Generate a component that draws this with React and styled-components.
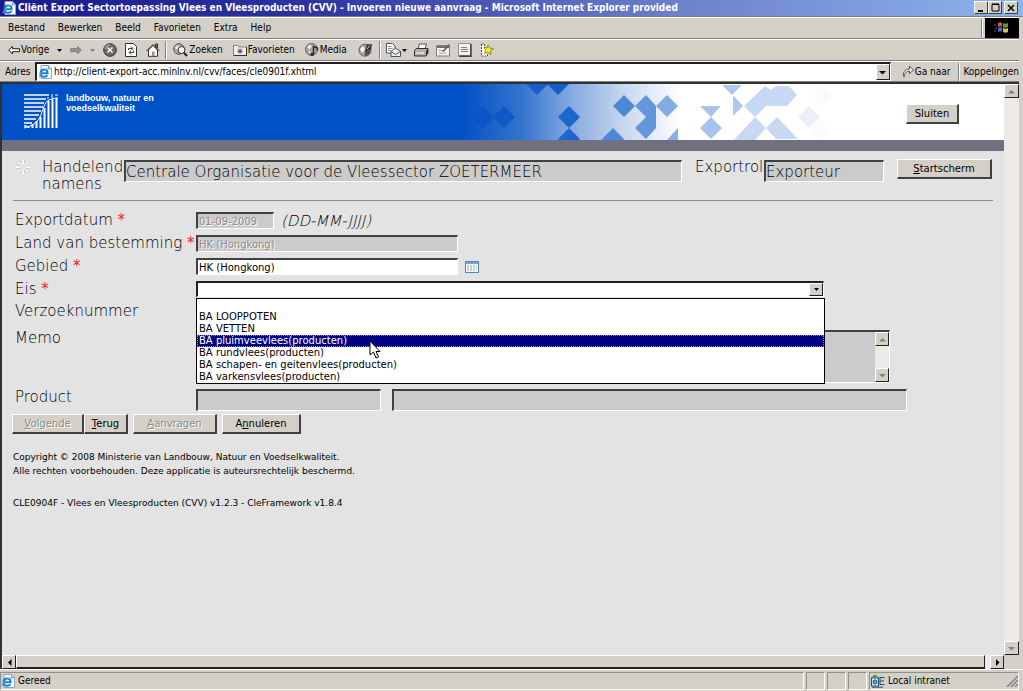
import React from 'react'
import styled, { createGlobalStyle } from 'styled-components'

const GlobalStyle = createGlobalStyle`
  * {
    box-sizing: border-box;
  }
  body {
    margin: 0;
    font-family: 'DejaVu Sans Condensed', 'DejaVu Sans', sans-serif;
    font-size: 10px;
    color: #000000;
  }
  button,
  input,
  select,
  textarea {
    margin: 0;
    border-radius: 0;
    font: inherit;
  }
  svg {
    display: block;
    flex: none;
  }
`

const Window = styled.div`
  display: flex;
  flex-direction: column;
  min-height: 100vh;
  background: #d4d0c8;
`
const TitleBar = styled.header`
  display: flex;
  align-items: center;
  gap: 2px;
  height: 17px;
  padding: 0 5px 1px 2px;
  border-bottom: 1px solid #808080;
  background: linear-gradient(90deg, #1a1a8c 0%, #2c34a0 30%, #6c80cc 66%, #8cb4ec 100%);
`
const Title = styled.h1`
  flex: 1;
  min-width: 0;
  margin: 0;
  overflow: hidden;
  font-size: 10px;
  font-weight: 700;
  line-height: 14px;
  white-space: nowrap;
  color: #ffffff;
`
const WindowButton = styled.button`
  display: flex;
  align-items: center;
  justify-content: center;
  width: 14px;
  height: 13px;
  padding: 0;
  margin-left: ${({ $gap }) => $gap || 0}px;
  border: 1px solid;
  border-color: #ffffff #404040 #404040 #ffffff;
  background: #d4d0c8;
`
const WindowButtons = styled.div`
  display: flex;
`
const Bar = styled.div`
  display: flex;
  align-items: center;
  height: ${({ $height }) => $height || 22}px;
  margin-right: 4px;
  padding-left: ${({ $indent }) => $indent || 0}px;
  border-top: 1px solid #ffffff;
  border-bottom: 1px solid #808080;
  line-height: 14px;
`
const Menu = styled.nav`
  display: flex;
  flex: 1;
  gap: 13px;
`
const MenuLink = styled.a`
  color: #000000;
  text-decoration: none;
`
const Throbber = styled.div`
  display: flex;
  align-items: center;
  justify-content: center;
  width: 34px;
  height: 20px;
  margin-left: 2px;
  background: #000000;
`
const ToolButton = styled.button`
  display: flex;
  align-items: center;
  gap: 1px;
  height: 18px;
  padding: 0;
  margin-left: ${({ $gap }) => $gap || 0}px;
  border: 0;
  background: none;
  line-height: 14px;
  white-space: nowrap;
`
const Divider = styled.span`
  width: 2px;
  height: 18px;
  margin-left: ${({ $gap }) => $gap || 0}px;
  border-left: 1px solid #808080;
  border-right: 1px solid #ffffff;
`
const AddressLabel = styled.label`
  width: 30px;
`
const AddressField = styled.div`
  display: flex;
  flex: 1;
  align-items: center;
  height: 19px;
  padding-left: 1px;
  border: 1px solid;
  border-width: 2px 1px 1px 2px;
  border-color: #202020 #ffffff #ffffff #202020;
  background: #ffffff;
`
const AddressInput = styled.input`
  flex: 1;
  min-width: 0;
  height: 14px;
  padding: 0 2px;
  border: 0;
  outline: 0;
`
const ArrowButton = styled.button`
  display: flex;
  flex: none;
  align-items: center;
  justify-content: center;
  width: ${({ $width }) => $width || 14}px;
  height: ${({ $height }) => $height || 14}px;
  padding: 0;
  border: 1px solid;
  border-color: #ffffff #202020 #202020 #ffffff;
  background: #d4d0c8;
`
const View = styled.main`
  display: grid;
  flex: 1;
  grid-template-columns: minmax(0, 1fr) 15px;
  grid-template-rows: 1fr 14px;
  margin-right: 4px;
  border-top: 2px solid #303030;
  border-left: 2px solid #303030;
`
const Page = styled.div`
  background: #e3e3e3;
  font-family: 'DejaVu Sans', sans-serif;
`
const VerticalTrack = styled.div`
  display: flex;
  flex-direction: column;
  justify-content: space-between;
  background: #eceae6;
`
const HorizontalTrack = styled.div`
  display: flex;
  background: #eceae6;
`
const Thumb = styled.div`
  flex: 1;
  margin-right: 5px;
  border: 1px solid;
  border-width: 1px 1px 2px 1px;
  border-color: #ffffff #202020 #202020 #ffffff;
  background: #d4d0c8;
`
const Banner = styled.div`
  display: flex;
  position: relative;
  align-items: flex-start;
  justify-content: space-between;
  height: 56px;
  padding: 0 45px 0 22px;
  background: linear-gradient(90deg, #0050c6 458px, #3474cc 520px, #86aae0 570px, #c6d6ef 620px, #ffffff 680px);
`
const Pattern = styled.svg`
  position: absolute;
  top: 0;
  left: 458px;
`
const Brand = styled.div`
  display: flex;
  gap: 8px;
  padding-top: 9px;
`
const BrandName = styled.p`
  margin: 0;
  font-family: 'Liberation Sans', sans-serif;
  font-size: 9px;
  font-weight: 700;
  line-height: 10px;
  color: #ffffff;
`
const Rule = styled.div`
  height: 11px;
  background: #707080;
`
const Button = styled.button`
  flex: none;
  width: ${({ $width }) => $width}px;
  height: 20px;
  margin-top: ${({ $top }) => $top || 0}px;
  margin-left: ${({ $gap }) => $gap || 0}px;
  padding: 0;
  border: 1px solid;
  border-width: 1px 2px 2px 1px;
  border-color: #ffffff #404040 #404040 #ffffff;
  background: #d4d0c8;
  line-height: 14px;
  color: #000000;
  &:disabled {
    color: #8c8a84;
    text-shadow: 1px 1px 0 #ffffff;
  }
`
const ActingBar = styled.div`
  display: flex;
  align-items: flex-start;
  height: 50px;
  margin: 0 11px;
  padding: 8px 1px 0 2px;
  border-bottom: 1px solid #8c8c8c;
`
const Text = styled.label`
  font-family: 'DejaVu Sans Light', 'DejaVu Sans', sans-serif;
  font-size: 15px;
  font-weight: 200;
  line-height: 17px;
`
const ActingLabel = styled(Text)`
  flex: none;
  width: ${({ $width }) => $width}px;
  margin-left: ${({ $gap }) => $gap}px;
`
const Field = styled.input`
  width: ${({ $width }) => ($width ? `${$width}px` : 'auto')};
  flex: ${({ $width }) => ($width ? 'none' : 1)};
  min-width: 0;
  height: ${({ $tall }) => ($tall ? 22 : 17)}px;
  margin-left: ${({ $gap }) => $gap || 0}px;
  padding: 0 1px;
  border: 1px solid;
  border-width: 2px 1px 1px 2px;
  border-color: #404040 #ffffff #ffffff #404040;
  outline: 0;
  background: ${({ disabled, readOnly }) => (disabled || readOnly ? '#cbcbcb' : '#ffffff')};
  color: #000000;
  &:disabled {
    color: #8c8c8c;
    text-shadow: 1px 1px 0 #ffffff;
  }
`
const LargeField = styled(Field)`
  margin-top: 1px;
  padding: 0;
  font-family: 'DejaVu Sans Light', 'DejaVu Sans', sans-serif;
  font-size: 15px;
  font-weight: 200;
`
const Form = styled.form`
  padding: 8px 97px 0 13px;
`
const Row = styled.div`
  display: flex;
  align-items: ${({ $top }) => ($top ? 'flex-start' : 'center')};
  height: ${({ $height }) => $height || 23}px;
  margin-top: ${({ $gap }) => $gap || 0}px;
`
const RowLabel = styled(Text)`
  flex: none;
  width: 181px;
  white-space: nowrap;
`
const Star = styled.span`
  font-family: 'DejaVu Sans', sans-serif;
  font-weight: 400;
  color: #f82020;
`
const Hint = styled.em`
  margin-left: 7px;
  font-family: 'DejaVu Sans Light', 'DejaVu Sans', sans-serif;
  font-size: 15px;
  font-weight: 200;
`
const IconButton = styled.button`
  display: flex;
  margin-left: 7px;
  padding: 0;
  border: 0;
  background: none;
`
const Combo = styled.div`
  display: flex;
  position: relative;
  width: 628px;
  height: 16px;
  border: 1px solid;
  border-width: 2px 1px 1px 2px;
  border-color: #202020 #ffffff #ffffff #202020;
  background: #ffffff;
`
const ComboSelect = styled.select`
  flex: 1;
  min-width: 0;
  height: 13px;
  padding: 0;
  border: 0;
  outline: 0;
  appearance: none;
  background: #ffffff;
`
const Options = styled.ul`
  position: absolute;
  z-index: 1;
  top: 15px;
  left: -2px;
  width: 629px;
  margin: 0;
  padding: 0;
  border: 1px solid #000000;
  background: #ffffff;
  list-style: none;
`
const Option = styled.li`
  height: 12px;
  padding-left: 2px;
  line-height: 12px;
  background: ${({ $active }) => ($active ? '#000080' : '#ffffff')};
  color: ${({ $active }) => ($active ? '#ffffff' : '#000000')};
  outline: ${({ $active }) => ($active ? '1px dotted #8c8cc8' : 'none')};
  outline-offset: -1px;
`
const Cursor = styled.svg`
  position: absolute;
  z-index: 2;
  top: 57px;
  left: 171px;
`
const Memo = styled.div`
  display: flex;
  width: 694px;
  height: 53px;
  border: 1px solid;
  border-width: 2px 1px 1px 2px;
  border-color: #404040 #ffffff #ffffff #404040;
`
const MemoInput = styled.textarea`
  flex: 1;
  padding: 0;
  border: 0;
  outline: 0;
  resize: none;
  background: #cbcbcb;
`
const Actions = styled.div`
  display: flex;
  margin: 3px 0 0 -3px;
`
const Footer = styled.footer`
  padding: 16px 11px 0;
  font-size: 9px;
  line-height: 14px;
  p {
    margin: 0 0 18px;
  }
`
const StatusBar = styled.footer`
  display: flex;
  gap: 2px;
  height: 22px;
  padding: 2px 4px 1px 0;
  border-top: 1px solid #ffffff;
`
const StatusCell = styled.div`
  display: flex;
  align-items: center;
  justify-content: space-between;
  width: ${({ $width }) => ($width ? `${$width}px` : 'auto')};
  flex: ${({ $width }) => ($width ? 'none' : 1)};
  border: 1px solid;
  border-color: #909090 #ffffff #ffffff #909090;
`
const StatusText = styled.span`
  display: flex;
  align-items: center;
  gap: 3px;
  line-height: 14px;
`

const ExplorerIcon = () => (
  <svg width="14" height="14" viewBox="0 0 14 14">
    <path d="M3 0.5h7.5l3 3v10H3z" fill="#fff" stroke="#8aa4c4" />
    <path d="M10.5 0.5v3h3" fill="#c8d8e8" stroke="#8aa4c4" />
    <path
      d="M2.6 8.2H9.6C9.6 5.6 8.2 4.6 6.2 4.6S2.6 6 2.6 8.2 4 11.8 6.2 11.8c1.6 0 2.6-.6 3.2-1.6"
      fill="none"
      stroke="#1c7cd0"
      strokeWidth="2"
    />
    <path d="M1 12.5C1.5 8.5 6 3.5 12 3.8" fill="none" stroke="#5ab0ea" />
  </svg>
)
const Arrow = ({ dir = 'down', color = '#000000' }) => {
  const points = {
    down: '0,2 7,2 3.5,5.5',
    up: '0,5.5 7,5.5 3.5,2',
    left: '5.5,0 5.5,7 2,3.5',
    right: '2,0 2,7 5.5,3.5',
  }
  return (
    <svg width="7" height="7" viewBox="0 0 7 7">
      <polygon points={points[dir]} fill={color} />
    </svg>
  )
}
const SmallArrow = ({ color = '#000000' }) => (
  <svg width="5" height="3" viewBox="0 0 5 3">
    <polygon points="0,0 5,0 2.5,3" fill={color} />
  </svg>
)
const BackIcon = () => (
  <svg width="12" height="10" viewBox="0 0 12 10">
    <path d="M.7 5L4.5 1.5v2.2h7v3h-7v2.2z" fill="#f4f4f4" stroke="#202020" />
  </svg>
)
const ForwardIcon = () => (
  <svg width="12" height="10" viewBox="0 0 12 10">
    <path d="M11.3 5L7.5 1.5v2.2h-7v3h7v2.2z" fill="#909090" stroke="#808080" />
  </svg>
)
const StopIcon = () => (
  <svg width="14" height="14" viewBox="0 0 14 14">
    <circle cx="7" cy="7" r="6.3" fill="#6c6c6c" stroke="#303030" />
    <path d="M2 6a5 5 0 015-4" fill="none" stroke="#c8c8c8" />
    <path d="M4.5 4.5l5 5M9.5 4.5l-5 5" stroke="#fff" strokeWidth="1.5" />
  </svg>
)
const RefreshIcon = () => (
  <svg width="12" height="14" viewBox="0 0 12 14">
    <path d="M.5.5h8l3 3v10H.5z" fill="#fff" stroke="#303030" />
    <path d="M3.5 7V5.500h4M6 3.500l2 2-2 2M8.500 7.500v2h-4M6 7.800L4 9.500l2 2" fill="none" stroke="#404040" />
  </svg>
)
const HomeIcon = () => (
  <svg width="14" height="14" viewBox="0 0 14 14">
    <path d="M9.5 1h2v4h-2z" fill="#808080" stroke="#303030" />
    <path d="M2.5 7v6.300h9V7L7 2.500z" fill="#fff" stroke="#303030" />
    <path d="M.5 8L7 1.500 13.500 8" fill="none" stroke="#303030" />
    <path d="M6 8.500h2.500V13H6z" fill="#909090" />
  </svg>
)
const SearchIcon = () => (
  <svg width="15" height="14" viewBox="0 0 15 14">
    <circle cx="6" cy="6" r="5.3" fill="#a8a8a8" stroke="#505050" />
    <path d="M1.5 4.500l3-2.500 2 2-2 3zM2 9l2-1" fill="#e4e4e4" />
    <circle cx="8.5" cy="7" r="3.5" fill="#f4f4f4" stroke="#303030" />
    <path d="M11 9.800l3 3.200" stroke="#202020" strokeWidth="2" />
  </svg>
)
const FavoritesIcon = () => (
  <svg width="14" height="14" viewBox="0 0 14 14">
    <path d="M.5 2.500h4l1.500 1.500h7.500v8.500H.5z" fill="#f0f0f0" stroke="#808080" />
    <path d="M13.500 4v8.500H1" fill="none" stroke="#303030" />
    <path d="M7 5.500v5.500M4.300 8.200h5.400M5 6.200l4 4M9 6.200l-4 4" stroke="#505050" />
  </svg>
)
const MediaIcon = () => (
  <svg width="14" height="14" viewBox="0 0 14 14">
    <circle cx="6.500" cy="6.500" r="6" fill="#a4a4a4" stroke="#606060" />
    <path d="M2 4l3-2.500 2 2L4 6.500zM3 9l2-1.500 1 3z" fill="#e8e8e8" />
    <path d="M8.500 11V3.500l4 1.500v2.500" fill="none" stroke="#303030" strokeWidth="1.5" />
    <circle cx="7.200" cy="11.200" r="1.800" fill="#303030" />
  </svg>
)
const HistoryIcon = () => (
  <svg width="15" height="14" viewBox="0 0 15 14">
    <circle cx="7" cy="7.200" r="6" fill="#a0a0a0" stroke="#606060" />
    <path d="M7 7.200L12.600 8A5.500 5.500 0 017 13z" fill="#505050" />
    <path d="M2 6l3-3 2 3.500L4 10z" fill="#f4f4f4" />
    <path d="M7 8L9 1.500l5-.5-1 6z" fill="#303030" />
    <path d="M9 6l3-3.500" stroke="#e0e0e0" />
  </svg>
)
const MailIcon = () => (
  <svg width="15" height="14" viewBox="0 0 15 14">
    <path d="M.5.500h6l2.500 2.500v7H.5z" fill="#fff" stroke="#505050" />
    <path d="M2 3.500h3.500M2 5.500h4.500M2 7.500h3" stroke="#909090" />
    <path d="M5 8.500l4.500-3.500 5 3.500v5H5z" fill="#ececec" stroke="#505050" />
    <path d="M5 8.500l4.700 3 4.800-3" fill="none" stroke="#505050" />
  </svg>
)
const PrintIcon = () => (
  <svg width="15" height="14" viewBox="0 0 15 14">
    <path d="M4 6l1.500-5h7l-1.500 5z" fill="#fff" stroke="#505050" />
    <path d="M.5 7.500l2-2h11.500v4.500l-2 3H.5z" fill="#b0b0b0" stroke="#303030" />
    <path d="M12 8l2-2v4l-2 3z" fill="#303030" />
    <path d="M2 10h8" stroke="#fff" />
  </svg>
)
const EditIcon = () => (
  <svg width="14" height="13" viewBox="0 0 14 13">
    <path d="M.5 1.500h13v10.500H.5z" fill="#f0f0f0" stroke="#808080" />
    <path d="M1 3h12" stroke="#707070" strokeWidth="2" />
    <path d="M3 6.500h5M3 9h7" stroke="#a0a0a0" />
    <path d="M13.500.500L7 7.500" stroke="#606060" strokeWidth="1.5" />
  </svg>
)
const DiscussIcon = () => (
  <svg width="14" height="14" viewBox="0 0 14 14">
    <path d="M.5.500h12v12H.5z" fill="#f0f0f0" stroke="#909090" />
    <path d="M13 1v12.200H1" fill="none" stroke="#404040" strokeWidth="1.5" />
    <path d="M3 4.500h6M3 6.500h7M3 8.500h7" stroke="#808080" />
  </svg>
)
const MessengerIcon = () => (
  <svg width="14" height="14" viewBox="0 0 14 14">
    <path d="M1.500 1v12h6v-3M1.500 1h3v4" fill="#fff" stroke="#505050" strokeDasharray="2 1" />
    <path
      d="M8 2l1.500 3 4 .8-3 2 .5 3.700-3-2.200-3.500 1.200 1-3.300L4 4.500l3.200.2z"
      fill="#f4ec20"
      stroke="#707010"
      strokeWidth=".7"
    />
  </svg>
)
const GoIcon = () => (
  <svg width="11" height="13" viewBox="0 0 11 13">
    <path
      d="M1 12C-.5 8 1.500 4 6.500 4V1.200L10.500 5 6.500 8.500V6C3.500 6 1.500 8.500 1 12z"
      fill="#f0f0f0"
      stroke="#303030"
      strokeWidth=".8"
    />
  </svg>
)
const Logo = () => (
  <svg width="34" height="36" viewBox="0 0 34 36">
    <path
      d="M0 2h25M0 6h22M0 10h20M0 14h19M0 18h17M0 22h15M0 26h12M0 30h8M0 33h3"
      stroke="#fff"
      strokeWidth="1.5"
    />
    <path d="M27 2h2M31 2h3M23 5h2M27 4h2" stroke="#fff" />
    <path
      d="M4.500 35v-2M8.500 35v-4M12.500 35v-7M16.500 35V24M20.500 35V15M24.500 35V8M28.500 35V6M32.500 35V5"
      stroke="#fff"
      strokeWidth="2"
    />
    <path d="M0 35C8 33 13 30 16 24S20 9 25 7s6-2 9-2" fill="none" stroke="#fff" />
  </svg>
)
const diamond = (x, y) => `M${x - 11} ${y}l11-11 11 11-11 11z`
const BannerPattern = () => (
  <Pattern width="372" height="56" viewBox="460 84 372 56">
    <path d={diamond(483, 117)} fill="#0c54c4" />
    <path d={diamond(504, 117)} fill="#1058c4" />
    <path d={diamond(537, 84) + diamond(558, 84)} fill="#1460c8" />
    <path d={diamond(569, 117) + diamond(569, 139)} fill="#1c66cc" />
    <path d={diamond(613, 139) + diamond(624, 106)} fill="#4c88d6" />
    <path d="M635 106l11-11 10 11v22l-10 11-11-11 11-11z" fill="#6496dc" />
    <path d={diamond(667, 106)} fill="#84aae2" />
    <path d="M678 128v12h-11z" fill="#8cb0e4" />
    <path d={`M700 106h21l-10 11z${diamond(711, 128)}`} fill="#a8c4ec" />
    <path d="M722 85h20l-10 10zM733 95v21l10-10z" fill="#b0c8ee" />
    <path d="M744 106l21-20 6 4 5-4h13l8 9-10 11h-21l-11 11z" fill="#c6d8f2" />
    <path d="M755 117l11 11-11 12h-21zM766 128l11-11 21 22h-22z" fill="#c8d8f2" />
    <path d={diamond(809, 117)} fill="#eaf0fa" />
    <path d={diamond(822, 96) + diamond(820, 130)} fill="#fafbfe" />
  </Pattern>
)
const Spinner = () => (
  <svg width="16" height="16" viewBox="0 0 16 16">
    {[0, 45, 90, 135, 180, 225, 270, 315].map((angle) => (
      <g key={angle} transform={`rotate(${angle} 8 8)`}>
        <path d="M8 1v4" stroke="#c0c0c0" strokeWidth="3" />
        <path d="M8 1v4" stroke="#fafafa" strokeWidth="2" />
      </g>
    ))}
  </svg>
)
const CalendarIcon = () => (
  <svg width="14" height="12" viewBox="0 0 14 12">
    <rect x=".5" y=".5" width="13" height="11" fill="#f4f8fc" stroke="#5a82bc" />
    <path d="M1 2h12" stroke="#7ca0d4" strokeWidth="2" />
    <path d="M2 5h10M2 7h10M2 9h8" stroke="#98b0b8" strokeDasharray="2 1" />
  </svg>
)
const WindowsFlag = () => (
  <svg width="16" height="14" viewBox="0 0 16 14">
    <path d="M4 2c2-1 3-1 4 0v4c-1-1-2-1-4 0z" fill="#e05030" />
    <path d="M9 2c2 1 3 1 5 0v4c-2 1-3 1-5 0z" fill="#50a040" />
    <path d="M4 7c2-1 3-1 4 0v4c-1-1-2-1-4 0z" fill="#4070d0" />
    <path d="M9 7c2 1 3 1 5 0v4c-2 1-3 1-5 0z" fill="#e0c040" />
    <path d="M0 4h2M1 7h2M0 10h2" stroke="#705088" />
  </svg>
)
const IntranetIcon = () => (
  <svg width="15" height="14" viewBox="0 0 15 14">
    <rect x="1.500" y="4" width="7" height="8" fill="#d8e8f4" stroke="#205070" />
    <circle cx="5" cy="8" r="2" fill="#60b0d8" stroke="#205070" />
    <path d="M1 3.500L5 .500l4 3z" fill="#30a050" />
    <path d="M10 3.500h4.500M10 7h4M10 10.500h4.500M10 3v8M2 13.200h11" stroke="#304878" />
  </svg>
)
const ResizeGrip = () => (
  <svg width="12" height="12" viewBox="0 0 12 12">
    <path d="M1 12L12 1M5 12l7-7M9 12l3-3" stroke="#808080" strokeWidth="1.5" />
  </svg>
)

const menuItems = ['Bestand', 'Bewerken', 'Beeld', 'Favorieten', 'Extra', 'Help']

const options = [
  '',
  'BA LOOPPOTEN',
  'BA VETTEN',
  'BA pluimveevlees(producten)',
  'BA rundvlees(producten)',
  'BA schapen- en geitenvlees(producten)',
  'BA varkensvlees(producten)',
]

const RequiredLabel = ({ htmlFor, children }) => (
  <RowLabel htmlFor={htmlFor}>
    {children} <Star>*</Star>
  </RowLabel>
)

const BrowserBars = () => (
  <>
    <TitleBar>
      <ExplorerIcon />
      <Title>
        Cliënt Export Sectortoepassing Vlees en Vleesproducten (CVV) - Invoeren nieuwe aanvraag -
        Microsoft Internet Explorer provided
      </Title>
      <WindowButtons>
        <WindowButton aria-label="Minimaliseren">
          <svg width="8" height="8" viewBox="0 0 8 8">
            <path d="M1 7h5" stroke="#000" strokeWidth="2" />
          </svg>
        </WindowButton>
        <WindowButton aria-label="Maximaliseren">
          <svg width="9" height="9" viewBox="0 0 9 9">
            <path d="M1 1.500h7v6.500H1zM1 1h7" fill="none" stroke="#000" />
          </svg>
        </WindowButton>
        <WindowButton aria-label="Afsluiten" $gap={2}>
          <svg width="8" height="8" viewBox="0 0 8 8">
            <path d="M1 1l6 6M7 1L1 7" stroke="#000" strokeWidth="1.5" />
          </svg>
        </WindowButton>
      </WindowButtons>
    </TitleBar>
    <Bar $indent={8}>
      <Menu>
        {menuItems.map((item) => (
          <MenuLink href="#" key={item}>
            {item}
          </MenuLink>
        ))}
      </Menu>
      <Divider />
      <Throbber>
        <WindowsFlag />
      </Throbber>
    </Bar>
    <Bar $indent={8}>
      <ToolButton>
        <BackIcon />
        Vorige
      </ToolButton>
      <ToolButton $gap={8} aria-label="Vorige pagina's">
        <SmallArrow />
      </ToolButton>
      <ToolButton $gap={8} aria-label="Volgende pagina">
        <ForwardIcon />
      </ToolButton>
      <ToolButton $gap={8} aria-label="Volgende pagina's">
        <SmallArrow color="#808080" />
      </ToolButton>
      <ToolButton $gap={8} aria-label="Stoppen">
        <StopIcon />
      </ToolButton>
      <ToolButton $gap={8} aria-label="Vernieuwen">
        <RefreshIcon />
      </ToolButton>
      <ToolButton $gap={9} aria-label="Startpagina">
        <HomeIcon />
      </ToolButton>
      <Divider $gap={5} />
      <ToolButton $gap={6}>
        <SearchIcon />
        Zoeken
      </ToolButton>
      <ToolButton $gap={10}>
        <FavoritesIcon />
        Favorieten
      </ToolButton>
      <ToolButton $gap={10}>
        <MediaIcon />
        Media
      </ToolButton>
      <ToolButton $gap={11} aria-label="Geschiedenis">
        <HistoryIcon />
      </ToolButton>
      <Divider $gap={6} />
      <ToolButton $gap={5} aria-label="E-mail">
        <MailIcon />
        <SmallArrow />
      </ToolButton>
      <ToolButton $gap={7} aria-label="Afdrukken">
        <PrintIcon />
      </ToolButton>
      <ToolButton $gap={7} aria-label="Bewerken">
        <EditIcon />
      </ToolButton>
      <ToolButton $gap={8} aria-label="Discussie">
        <DiscussIcon />
      </ToolButton>
      <ToolButton $gap={8} aria-label="Messenger">
        <MessengerIcon />
      </ToolButton>
    </Bar>
    <Bar $indent={5} $height={21}>
      <AddressLabel htmlFor="address">Adres</AddressLabel>
      <AddressField>
        <ExplorerIcon />
        <AddressInput
          id="address"
          defaultValue="http://client-export-acc.minlnv.nl/cvv/faces/cle0901f.xhtml"
        />
        <ArrowButton $height={16} aria-label="Adressen">
          <Arrow />
        </ArrowButton>
      </AddressField>
      <ToolButton $gap={12}>
        <GoIcon />
        Ga naar
      </ToolButton>
      <Divider $gap={8} />
      <ToolButton $gap={3}>Koppelingen</ToolButton>
    </Bar>
  </>
)

const RequestForm = () => (
  <Form>
    <Row>
      <RequiredLabel htmlFor="exportdatum">Exportdatum</RequiredLabel>
      <Field id="exportdatum" $width={78} defaultValue="01-09-2009" disabled />
      <Hint>(DD-MM-JJJJ)</Hint>
    </Row>
    <Row>
      <RequiredLabel htmlFor="land">Land van bestemming</RequiredLabel>
      <Field id="land" $width={262} defaultValue="HK (Hongkong)" disabled />
    </Row>
    <Row>
      <RequiredLabel htmlFor="gebied">Gebied</RequiredLabel>
      <Field id="gebied" $width={262} defaultValue="HK (Hongkong)" />
      <IconButton type="button" aria-label="Gebied kiezen">
        <CalendarIcon />
      </IconButton>
    </Row>
    <Row $height={22}>
      <RequiredLabel htmlFor="eis">Eis</RequiredLabel>
      <Combo>
        <ComboSelect id="eis" defaultValue="">
          <option value="" />
        </ComboSelect>
        <ArrowButton type="button" $height={13} aria-label="Eis kiezen">
          <SmallArrow />
        </ArrowButton>
        <Options role="listbox" aria-label="Eis">
          {options.map((option, index) => (
            <Option key={option} role="option" $active={index === 3} aria-selected={index === 3}>
              {option}
            </Option>
          ))}
        </Options>
        <Cursor width="13" height="20" viewBox="0 0 13 20">
          <path d="M1 1v14l3.500-3 2.500 6 2.500-1-2.500-5.500H11z" fill="#fff" stroke="#000" />
        </Cursor>
      </Combo>
    </Row>
    <Row $height={22}>
      <RowLabel as="span">Verzoeknummer</RowLabel>
    </Row>
    <Row $height={53} $gap={8} $top>
      <RowLabel htmlFor="memo">Memo</RowLabel>
      <Memo>
        <MemoInput id="memo" readOnly />
        <VerticalTrack>
          <ArrowButton type="button" aria-label="Omhoog">
            <Arrow dir="up" color="#808080" />
          </ArrowButton>
          <ArrowButton type="button" aria-label="Omlaag">
            <Arrow color="#808080" />
          </ArrowButton>
        </VerticalTrack>
      </Memo>
    </Row>
    <Row $height={22} $gap={6} $top>
      <RowLabel htmlFor="product">Product</RowLabel>
      <Field id="product" $width={185} $tall readOnly />
      <Field $gap={11} $tall readOnly aria-label="Productomschrijving" />
    </Row>
    <Actions>
      <Button type="button" $width={72} disabled>
        <u>V</u>olgende
      </Button>
      <Button type="button" $width={44}>
        <u>T</u>erug
      </Button>
      <Button type="button" $width={84} $gap={5} disabled>
        <u>A</u>anvragen
      </Button>
      <Button type="button" $width={79} $gap={5}>
        A<u>n</u>nuleren
      </Button>
    </Actions>
  </Form>
)

const App = () => (
  <Window>
    <GlobalStyle />
    <BrowserBars />
    <View>
      <Page>
        <Banner>
          <BannerPattern />
          <Brand>
            <Logo />
            <BrandName>
              landbouw, natuur en
              <br />
              voedselkwaliteit
            </BrandName>
          </Brand>
          <Button $width={53} $top={20}>
            Sluiten
          </Button>
        </Banner>
        <Rule />
        <ActingBar>
          <Spinner />
          <ActingLabel htmlFor="namens" $width={82} $gap={11}>
            Handelend namens
          </ActingLabel>
          <LargeField
            id="namens"
            $tall
            defaultValue="Centrale Organisatie voor de Vleessector ZOETERMEER"
            readOnly
          />
          <ActingLabel htmlFor="exportrol" $width={69} $gap={13}>
            Exportrol
          </ActingLabel>
          <LargeField id="exportrol" $width={120} $tall defaultValue="Exporteur" readOnly />
          <Button $width={95} $gap={13}>
            <u>S</u>tartscherm
          </Button>
        </ActingBar>
        <RequestForm />
        <Footer>
          <p>
            Copyright © 2008 Ministerie van Landbouw, Natuur en Voedselkwaliteit.
            <br />
            Alle rechten voorbehouden. Deze applicatie is auteursrechtelijk beschermd.
          </p>
          <p>CLE0904F - Vlees en Vleesproducten (CVV) v1.2.3 - CleFramework v1.8.4</p>
        </Footer>
      </Page>
      <VerticalTrack>
        <ArrowButton $width={15} aria-label="Pagina omhoog">
          <Arrow dir="up" color="#808080" />
        </ArrowButton>
        <ArrowButton $width={15} aria-label="Pagina omlaag">
          <Arrow color="#808080" />
        </ArrowButton>
      </VerticalTrack>
      <HorizontalTrack>
        <ArrowButton aria-label="Pagina naar links">
          <Arrow dir="left" />
        </ArrowButton>
        <Thumb />
        <ArrowButton aria-label="Pagina naar rechts">
          <Arrow dir="right" />
        </ArrowButton>
      </HorizontalTrack>
    </View>
    <StatusBar>
      <StatusCell>
        <StatusText>
          <ExplorerIcon />
          Gereed
        </StatusText>
      </StatusCell>
      <StatusCell $width={19} />
      <StatusCell $width={19} />
      <StatusCell $width={19} />
      <StatusCell $width={150}>
        <StatusText>
          <IntranetIcon />
          Local intranet
        </StatusText>
        <ResizeGrip />
      </StatusCell>
    </StatusBar>
  </Window>
)

export default App
